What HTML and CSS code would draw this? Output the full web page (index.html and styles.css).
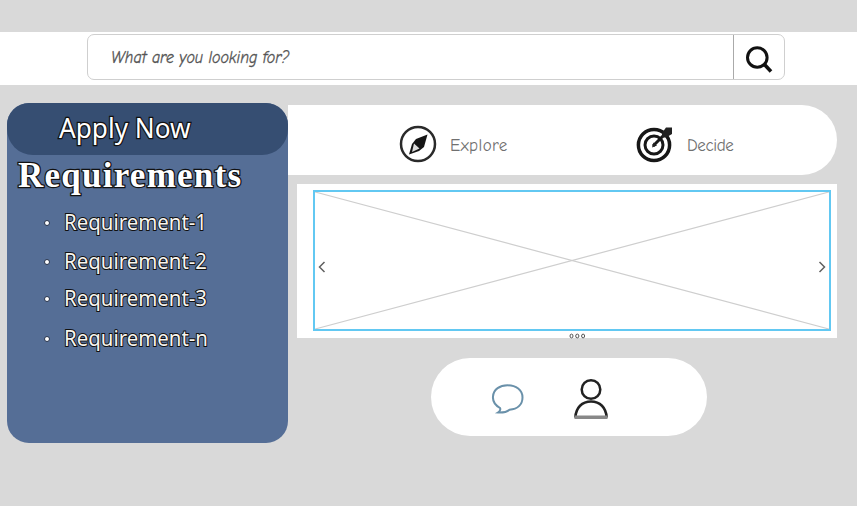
FILE: index.html
```
<!DOCTYPE html>
<html lang="en">
<head>
<meta charset="utf-8">
<title>Apply Now</title>
<link rel="stylesheet" href="styles.css">
</head>
<body>
<header class="topbar">
  <div class="search">
    <div class="search-field"><span class="search-text">What are you looking for?</span></div>
    <div class="search-button">
      <svg width="30" height="30" viewBox="0 0 30 30" fill="none" stroke="#111"><circle cx="13.300" cy="13.500" r="9.800" stroke-width="3"/><path d="M20 20l7 7.500" stroke-width="3.600"/></svg>
    </div>
  </div>
</header>
<main class="layout">
  <aside class="sidebar">
    <div class="apply"><span class="apply-text">Apply Now</span></div>
    <h1 class="heading"><span class="heading-text">Requirements</span></h1>
    <ul class="requirements">
      <li><span class="dot"></span><span class="req">Requirement-1</span></li>
      <li><span class="dot"></span><span class="req">Requirement-2</span></li>
      <li class="tight"><span class="dot"></span><span class="req">Requirement-3</span></li>
      <li class="loose"><span class="dot"></span><span class="req">Requirement-n</span></li>
    </ul>
  </aside>
  <div class="content">
    <nav class="tabs">
      <div class="tab explore">
        <svg width="38" height="38" viewBox="0 0 38 38"><circle cx="19" cy="19" r="17" fill="none" stroke="#2a2a2a" stroke-width="2.500"/><path d="M28.500 9.500L25 22l-5 4-10 3.500L13 19l4-5z" fill="#151515"/><path d="M15 18.500l5.500 5-7.500 3.500z" fill="#ddd"/></svg>
        <span class="tab-text">Explore</span>
      </div>
      <div class="tab decide">
        <svg width="38" height="38" viewBox="0 0 38 38" fill="none" stroke="#171717"><circle cx="18" cy="20" r="15.600" stroke-width="3.500"/><circle cx="18" cy="20" r="9" stroke-width="3"/><path d="M17 21L30 8" stroke-width="3"/><path d="M26 8l4-5.500h6V9l-6 3.500h-4z" fill="#222" stroke="none"/><path d="M16 22.500l1.500-5 3.500 3z" fill="#222" stroke="none"/></svg>
        <span class="tab-text">Decide</span>
      </div>
    </nav>
    <section class="carousel">
      <div class="frame">
        <svg class="cross" viewBox="0 0 514 137" preserveAspectRatio="none"><path d="M0 0L514 137M0 137L514 0"/></svg>
        <svg class="arrow" width="8" height="12" viewBox="0 0 8 12"><path d="M6.500 1L1.500 6l5 5"/></svg>
        <svg class="arrow" width="8" height="12" viewBox="0 0 8 12"><path d="M1.500 1l5 5-5 5"/></svg>
      </div>
      <svg class="pager" width="17" height="6" viewBox="0 0 17 6"><ellipse cx="2.500" cy="3" rx="1.500" ry="1.900"/><ellipse cx="8.300" cy="3" rx="1.600" ry="1.900"/><ellipse cx="14.100" cy="3" rx="1.500" ry="1.900"/></svg>
    </section>
    <section class="actions">
      <svg class="chat" width="34" height="32" viewBox="0 0 34 32" fill="none" stroke="#6a91aa" stroke-width="2"><path d="M9 25C4 22 1.500 18.500 2 13.500 2.500 6 9 2.300 16.500 2.300 25 2.300 31.500 7 31.500 14.500c0 7-5 11.500-13 12.300-2.500 2-6 3-11.500 2.700 2-1.300 3-2.500 2-4.500z"/></svg>
      <svg width="36" height="42" viewBox="0 0 36 42" fill="none" stroke="#222" stroke-width="2.500"><circle cx="18" cy="11.500" r="9.300"/><path d="M2.300 39.500C3 29.500 9 23.500 18 23.500s15 6 15.700 16"/><path d="M1.500 39.300h33" stroke="#888" stroke-width="3.400"/></svg>
    </section>
  </div>
</main>
</body>
</html>
```

FILE: styles.css
```
* { box-sizing: border-box; }
body {
  margin: 0;
  padding-top: 32px;
  height: 506px;
  overflow: hidden;
  background: #d9d9d9;
  font-family: "Noto Sans", sans-serif;
}
svg { display: block; flex: none; }
.topbar {
  height: 53px;
  padding: 2px 72px 0 87px;
  background: #fff;
}
.search {
  display: flex;
  height: 46px;
  border: 1.500px solid #cfcfcf;
  border-radius: 7px;
}
.search-field {
  flex: 1;
  padding: 10px 0 0 23px;
  border-right: 1px solid #aaa;
}
.search-text {
  display: inline-block;
  font: italic 17px/26px "Comic Neue", "Open Sans", sans-serif;
  color: #555;
  white-space: nowrap;
  -webkit-text-stroke: .3px #555;
  transform: scaleX(.937);
  transform-origin: left;
}
.search-button { width: 50px; padding: 9px 0 0 10px; }
.layout { display: flex; padding: 18px 0 0 7px; }
.sidebar {
  z-index: 1;
  width: 281px;
  height: 340px;
  border-radius: 22px;
  background: #556e96;
  color: #fff;
}
.apply {
  height: 52px;
  padding-left: 52px;
  border-radius: 22px 22px 26px 26px;
  background: #364e72;
  font-size: 27px;
  line-height: 49px;
}
.apply-text, .heading-text, .req {
  display: inline-block;
  white-space: nowrap;
  transform-origin: left;
  -webkit-text-stroke: 2.500px #111;
  paint-order: stroke fill;
}
.apply-text { transform: scaleX(.97); }
.heading {
  height: 48px;
  margin: 0;
  padding-left: 11px;
  font: bold 35px/42px "Liberation Serif", serif;
  letter-spacing: 1.250px;
}
.requirements { margin: 0; padding: 0 0 0 37px; list-style: none; font-size: 22px; }
.requirements li { display: flex; align-items: center; height: 39px; }
.requirements .tight { height: 35px; }
.requirements .loose { height: 45px; }
.dot {
  width: 6px;
  height: 6px;
  margin-right: 14px;
  border: 1px solid #26324a;
  border-radius: 50%;
  background: #fff;
}
.req {
  margin-top: -4px;
  color: #f8f5ef;
  transform: scaleX(.928);
  -webkit-text-stroke-width: 2px;
}
.content { flex: 1; padding-top: 2px; }
.tabs {
  display: flex;
  width: 549px;
  height: 70px;
  padding: 20px 0 0 110px;
  border-radius: 0 35px 35px 0;
  background: #fff;
}
.tab { display: flex; gap: 13px; height: 38px; align-items: center; }
.explore { width: 238px; }
.explore svg { margin-left: 1px; }
.tab-text {
  margin-top: 3px;
  font: 17px/24px "Comic Neue", "Open Sans", sans-serif;
  letter-spacing: .4px;
  color: #707070;
}
.decide .tab-text { letter-spacing: -.4px; }
.carousel {
  width: 540px;
  height: 154px;
  margin: 9px 0 0 9px;
  padding: 6px 6px 0 16px;
  background: #fff;
}
.frame {
  position: relative;
  display: flex;
  justify-content: space-between;
  height: 141px;
  padding: 69px 3px 0;
  border: 2px solid #62c8f2;
}
.cross { position: absolute; inset: 0; width: 100%; height: 100%; }
.cross path { stroke: #cecece; stroke-width: 1.200; }
.arrow { fill: none; stroke: #606060; stroke-width: 1.500; }
.pager { margin: 2px 0 0 256px; fill: none; stroke: #555; stroke-width: 1; }
.actions {
  display: flex;
  width: 276px;
  height: 78px;
  margin: 20px 0 0 143px;
  padding: 20px 0 0 60px;
  gap: 48px;
  border-radius: 39px;
  background: #fff;
}
.chat { margin-top: 5px; }
```
